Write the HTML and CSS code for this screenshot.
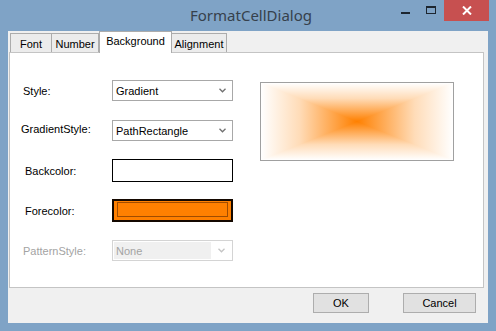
FILE: index.html
```html
<!DOCTYPE html>
<html lang="en">
  <head>
    <meta charset="UTF-8" />
    <meta name="viewport" content="width=device-width, initial-scale=1.0" />
    <title>FormatCellDialog</title>
    <link rel="stylesheet" href="styles.css">
  </head>
  <body>
    <div class="window">
      <div class="titlebar">
        <div></div>
        <div class="title">FormatCellDialog</div>
        <div class="caption">
          <span class="cap-btn"><i class="min"></i></span>
          <span class="cap-btn"><i class="max"></i></span>
          <span class="cap-btn close">
            <svg width="10" height="9" viewBox="0 0 10 9">
              <path d="M1 0.5 L9 8.5 M9 0.5 L1 8.5" stroke="#fff" stroke-width="2" />
            </svg>
          </span>
        </div>
      </div>

      <div class="client">
        <div class="tabs">
          <span class="tab tab-font">Font</span>
          <span class="tab tab-number">Number</span>
          <span class="tab tab-bg active">Background</span>
          <span class="tab tab-align">Alignment</span>
        </div>

        <div class="page">
          <div class="form">
            <div class="row">
              <label class="label">Style:</label>
              <div class="combo">
                <span class="combo-text">Gradient</span>
                <span class="combo-arrow">
                  <svg width="7" height="5" viewBox="0 0 7 5"><path d="M0.5 0.8 L3.5 3.8 L6.5 0.8" fill="none" stroke="#707070" stroke-width="1.3" /></svg>
                </span>
              </div>
            </div>
            <div class="row">
              <label class="label shift-left">GradientStyle:</label>
              <div class="combo">
                <span class="combo-text">PathRectangle</span>
                <span class="combo-arrow">
                  <svg width="7" height="5" viewBox="0 0 7 5"><path d="M0.5 0.8 L3.5 3.8 L6.5 0.8" fill="none" stroke="#707070" stroke-width="1.3" /></svg>
                </span>
              </div>
            </div>
            <div class="row">
              <label class="label shift-right">Backcolor:</label>
              <div class="swatch back"></div>
            </div>
            <div class="row">
              <label class="label shift-right">Forecolor:</label>
              <div class="swatch fore"><div class="fore-inner"></div></div>
            </div>
            <div class="row">
              <label class="label disabled">PatternStyle:</label>
              <div class="combo combo-disabled">
                <span class="combo-text">None</span>
                <span class="combo-arrow">
                  <svg width="7" height="5" viewBox="0 0 7 5"><path d="M0.5 0.8 L3.5 3.8 L6.5 0.8" fill="none" stroke="#c4c4c4" stroke-width="1.3" /></svg>
                </span>
              </div>
            </div>
          </div>

          <div class="preview">
            <svg width="192" height="77" viewBox="0 0 192 77">
              <defs>
                <linearGradient id="gx" x1="0" y1="0" x2="192" y2="0" gradientUnits="userSpaceOnUse">
                  <stop offset="0" stop-color="#ffffff" />
                  <stop offset="0.2" stop-color="#ffdcb8" />
                  <stop offset="0.5" stop-color="#ff8000" />
                  <stop offset="0.8" stop-color="#ffdcb8" />
                  <stop offset="1" stop-color="#ffffff" />
                </linearGradient>
                <linearGradient id="gy" x1="0" y1="0" x2="0" y2="77" gradientUnits="userSpaceOnUse">
                  <stop offset="0" stop-color="#ffffff" />
                  <stop offset="0.2" stop-color="#ffdcb8" />
                  <stop offset="0.5" stop-color="#ff8000" />
                  <stop offset="0.8" stop-color="#ffdcb8" />
                  <stop offset="1" stop-color="#ffffff" />
                </linearGradient>
              </defs>
              <rect x="0" y="0" width="192" height="77" fill="url(#gx)" />
              <polygon points="0,0 192,0 96,38.5" fill="url(#gy)" />
              <polygon points="0,77 192,77 96,38.5" fill="url(#gy)" />
            </svg>
          </div>
        </div>

        <div class="footer">
          <button class="btn ok">OK</button>
          <button class="btn cancel">Cancel</button>
        </div>
      </div>
    </div>
  </body>
</html>
```

FILE: styles.css
```css
* {
  margin: 0;
  padding: 0;
  box-sizing: border-box;
}
body {
  width: 496px;
  height: 331px;
  overflow: hidden;
  font-family: "Liberation Sans", Arial, sans-serif;
  font-size: 11px;
  color: #000;
}
.window {
  width: 496px;
  height: 331px;
  background-color: #7fa3c6;
  padding: 0 8px 8px 8px;
  display: flex;
  flex-direction: column;
}
.titlebar {
  height: 31px;
  display: grid;
  grid-template-columns: 1fr auto 1fr;
}
.title {
  font-family: "Noto Sans", "Open Sans", sans-serif;
  font-size: 15px;
  line-height: 31px;
  color: #36414c;
  padding-left: 6px;
}
.caption {
  justify-self: end;
  display: flex;
  align-items: flex-start;
  margin-right: -1px;
}
.cap-btn {
  width: 26px;
  height: 21px;
  display: flex;
  justify-content: center;
  align-items: center;
}
.cap-btn .min {
  display: block;
  width: 9px;
  height: 2px;
  background-color: #1d2630;
  margin-top: 5px;
}
.cap-btn .max {
  display: block;
  width: 10px;
  height: 8px;
  border: 1px solid #1d2630;
  border-top-width: 2px;
  margin-top: -1px;
}
.close {
  width: 45px;
  background-color: #c75050;
}

.client {
  flex: 1;
  background-color: #f0f0f0;
  display: flex;
  flex-direction: column;
}
.tabs {
  height: 22px;
  display: flex;
  align-items: flex-end;
  padding-left: 2px;
  margin-bottom: -1px;
}
.tab {
  height: 19px;
  margin-bottom: 1px;
  border: 1px solid #acacac;
  border-bottom: none;
  background-color: #ececec;
  display: flex;
  justify-content: center;
  align-items: center;
  padding-top: 1px;
}
.tab-font {
  width: 42px;
}
.tab-number {
  width: 47px;
  border-left: none;
}
.tab-bg {
  width: 73px;
}
.tab-align {
  width: 55px;
  border-left: none;
}
.tab.active {
  height: 22px;
  margin-bottom: 0;
  background-color: #fff;
  position: relative;
  z-index: 1;
  padding-top: 0;
  padding-bottom: 3px;
  border-left: 1px solid #acacac;
}
.page {
  height: 236px;
  margin: 0 4px 0 1px;
  background-color: #fff;
  border: 1px solid #c4c4c4;
  display: flex;
}
.form {
  width: 223px;
  padding: 26px 0 0 13px;
  display: flex;
  flex-direction: column;
  gap: 17px;
}
.row {
  height: 23px;
  display: flex;
  align-items: center;
}
.label {
  width: 89px;
}
.shift-left {
  margin-left: -2px;
  width: 91px;
  margin-top: -3px;
}
.shift-right {
  padding-left: 2px;
}
.disabled {
  color: #a3a3a3;
}
.combo {
  width: 121px;
  height: 21px;
  border: 1px solid #a8a8a8;
  background-color: #fff;
  display: flex;
  align-items: center;
}
.combo-text {
  flex: 1;
  padding-left: 3px;
}
.combo-arrow {
  width: 19px;
  display: flex;
  justify-content: center;
  align-items: center;
}
.combo-disabled {
  border-color: #d4d4d4;
  padding: 1px;
  align-items: stretch;
}
.combo-disabled .combo-text {
  background-color: #f0f0f0;
  color: #a3a3a3;
  display: flex;
  align-items: center;
  padding-left: 2px;
}
.combo-disabled .combo-arrow {
  width: 20px;
}
.swatch {
  width: 121px;
  height: 23px;
}
.back {
  border: 1px solid #000;
  background-color: #fff;
}
.fore {
  border: 2px solid #140800;
  background-color: #ff8000;
  padding: 1px 3px 3px 3px;
}
.fore-inner {
  width: 100%;
  height: 100%;
  border: 1px solid #a04c00;
}
.preview {
  width: 194px;
  height: 79px;
  margin: 29px 0 0 27px;
  border: 1px solid #a0a0a0;
  display: flex;
}
.footer {
  flex: 1;
  display: flex;
  justify-content: flex-end;
  align-items: flex-start;
  padding: 5px 12px 0 0;
  gap: 34px;
}
.btn {
  height: 20px;
  background-color: #e1e1e1;
  border: 1px solid #adadad;
  font-family: "Liberation Sans", Arial, sans-serif;
  font-size: 11px;
  color: #000;
}
.ok {
  width: 56px;
}
.cancel {
  width: 73px;
}
```
